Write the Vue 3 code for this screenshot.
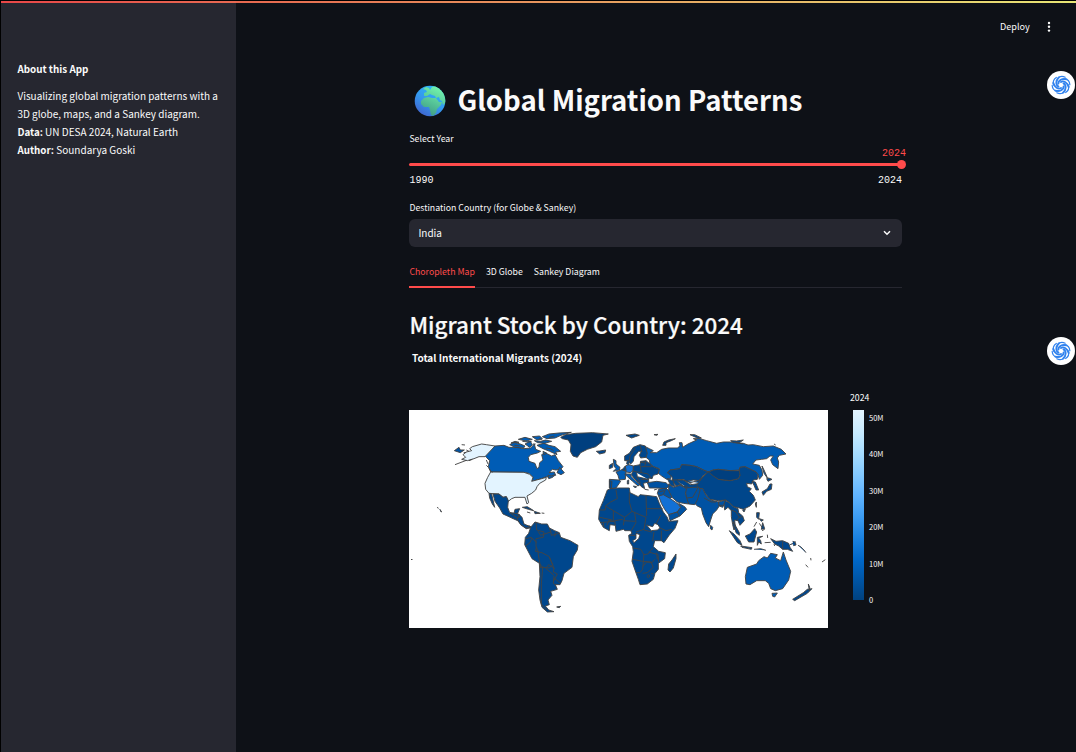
<script setup>
const info = [
  { label: '', text: 'Visualizing global migration patterns with a' },
  { label: '', text: '3D globe, maps, and a Sankey diagram.' },
  { label: 'Data:', text: ' UN DESA 2024, Natural Earth' },
  { label: 'Author:', text: ' Soundarya Goski' },
]
const tabs = ['Choropleth Map', '3D Globe', 'Sankey Diagram']
const ticks = ['50M', '40M', '30M', '20M', '10M', '0']
const arms = [0, 60, 120, 180, 240, 300]

const N = '#00478d'
const M = '#0052a3'
const C = '#005cb5'
const L = '#e3f4ff'

// Each region keeps its own local origin; three local units equal one pixel.
const regions = [
  {
    at: 'translate(409 420) scale(.33333)',
    shapes: [
      [C, 'M258 78L285 76 300 82 325 82 345 86 365 84 376 72 380 88 395 94 385 99 365 104 358 112 360 124 378 130 384 146 390 142 392 128 402 120 398 104 408 98 428 108 438 104 448 122 462 140 455 148 440 150 430 148 420 158 436 156 440 166 420 172 412 170 398 176 368 184 372 172 360 160 345 157 245 156 238 140 242 122 232 112 228 108Z'],
      [L, 'M258 78L232 74 218 72 190 80 182 86 188 92 172 96 162 104 170 112 158 118 175 122 195 116 210 110 228 110z'],
      [L, 'M245 156L345 157 362 163 372 172 368 184 398 176 412 172 410 180 392 190 384 200 380 210 368 220 354 228 359 248 354 252 348 232 330 232 318 232 308 236 298 244 292 230 282 232 270 222 240 220 230 208 228 190 236 172z'],
      [N, 'M252 222L270 222 282 232 292 230 298 242 296 262 302 278 315 280 318 268 332 266 326 280 316 288 335 290 338 305 348 318 362 318 368 323 352 326 340 318 326 302 308 294 300 290 282 282 272 264 258 244z'],
      [N, 'M240 220L248 222 252 240 257 262 250 252 242 234z'],
      [N, 'M340 262L355 260 374 272 358 268zM376 274L394 280 378 281zM354 276l10 3M398 279l8 1'],
      [N, 'M84 262l5 3M92 267l6 9-5-4'],
      ['#003f7f', 'M455 52L470 44 500 40 550 38 598 42 582 46 578 66 560 80 535 88 515 98 505 112 492 108 484 94 486 74 478 60 460 56z'],
      [N, 'M562 94L572 93 590 90 588 98 572 102z'],
      [C, 'M302 74L315 67 334 72 348 78 344 84 318 82zM328 58l20-6 22 6-18 5zM306 69l12-5 12 3zM370 50l22-2 8 8-16 4zM400 50L420 42 450 39 487 37 456 46 438 54 414 56zM376 62l20 2 14-4 18 4-20 6-22-2zM384 76L404 70 420 76 438 80 455 94 440 96 444 104 422 94 402 86zM348 72l16-8 6 10-8 8zM402 94l12 6-10 4zM372 72l8 0M390 56l10 4M340 64l16 2 12-2M316 76l16 2M410 84l14 2 10 6M420 52l16-4'],
      [C, 'M444 158L452 142 466 158 456 164zM417 166l10 2 10-4-6 8-12 4z'],
      [M, 'M136 92L150 82 154 90 166 90 154 98zM158 74l10 1M138 134L172 121M232 136l6 6M232 120l5 12M240 146l10 12M180 122l10-4M172 90l8 4M164 98l8-1'],
    ],
  },
  {
    at: 'translate(590 420) scale(.33333)',
    shapes: [
      [C, 'M166 80L178 86 190 92 180 98 200 98 215 88 235 84 262 84 270 78 268 68 276 68 278 82 294 72 320 60 310 56 330 56 350 62 380 70 400 66 420 66 460 70 474 75 490 74 520 80 550 78 574 88 588 102 568 106 562 114 566 126 564 146 548 134 542 120 550 108 540 108 530 116 515 118 498 120 488 132 508 136 516 150 518 166 508 178 504 164 498 156 465 140 450 142 448 150 420 152 385 148 370 150 355 156 340 150 320 140 300 136 275 134 270 146 240 150 232 158 244 166 242 176 230 178 215 168 205 160 208 146 190 140 180 132 178 120 168 112 170 100z'],
      [N, 'M240 150L270 146 275 134 300 136 320 140 340 150 355 156 338 168 330 182 310 180 290 184 280 178 262 180 250 190 246 170 232 158z'],
      [N, 'M246 180L262 180 280 180 300 188 325 182 338 172 334 198 310 206 290 206 270 194 258 198zM262 184l18 14 10 0 6 8M280 180l22 14 28-4M300 188l8 8'],
      ['#00468b', 'M338 172L355 155 370 165 385 178 420 182 445 176 450 166 445 160 450 142 465 140 498 156 504 164 502 178 490 180 485 192 470 190 472 200 484 206 478 214 490 226 496 240 480 258 460 268 448 264 430 260 418 248 408 240 385 242 360 238 345 220 338 206 328 206 320 196z'],
      ['#003f7f', 'M355 156L370 150 385 148 420 152 448 152 450 166 445 176 420 182 385 178 370 168z'],
      [M, 'M325 206L338 206 348 226 362 240 385 246 408 240 398 262 388 258 380 270 368 282 362 300 356 320 348 308 338 282 334 264 322 258 314 250 322 236z'],
      [M, 'M362 316l6 6-2 8-5-4z'],
      [M, 'M286 204L310 202 328 202 330 212 322 240 314 254 296 252 288 234z'],
      ['none', 'M290 234l18-2 16-28M342 234l22 12 14 0M386 244l0 12 14 0'],
      [M, 'M236 192L250 202 270 196 290 206 286 220 290 234 296 252 280 250 262 246 246 232 236 214z'],
      [M, 'M172 188L200 184 228 188 238 198 228 206 200 204 178 204z'],
      [N, 'M232 176l18 6 4 18-12-4z'],
      [M, 'M206 208L228 204 236 212 246 232 238 236 220 226 206 228 202 220zM228 204l-8 20M206 216l16-4'],
      ['#1270d5', 'M206 228L220 224 238 234 256 246 264 252 272 262 262 276 236 284 224 268 214 250z'],
      [M, 'M236 284L262 276 272 262 266 250 284 260 290 268 270 288 240 302zM262 276l6 12'],
      [N, 'M406 242L418 248 430 260 444 266 446 278 458 288 463 302 450 316 444 302 434 300 436 324 432 330 428 314 424 290 424 272 414 262 404 270 402 252zM424 270l14 6 10 16-8 8M448 292l10-2'],
      [N, 'M486 184L496 186 506 210 498 210 492 196zM516 216L532 206 540 192 546 192 544 208 530 214 520 226zM530 176l6-2 10 4-12 6zM496 252l3-6 0 16zM458 270l8-2-4 8z'],
      [C, 'M516 138L522 150 530 168 532 174 522 160z'],
      [N, 'M166 78L150 74 130 82 118 100 104 108 104 122 114 122 122 132 130 124 132 110 146 94 154 94 148 106 152 114 168 112 172 100zM150 76l6 20M136 84l-16 24-2 14'],
      [C, 'M70 118L78 122 78 132 90 142 88 150 70 154 78 146 72 138z'],
      [N, 'M58 136L68 130 68 142 58 146z'],
      [C, 'M78 156L98 148 108 156 106 178 88 180 84 166z'],
      ['#1270d5', 'M106 138L116 134 130 138 130 150 122 158 108 156z'],
      [N, 'M110 132l2-12 6 2-2 12zM96 150l10-12 2 14z'],
      [C, 'M58 178L86 180 92 184 78 204 60 206z'],
      [N, 'M58 182l8 2-2 22-6-2z'],
      [N, 'M130 138L150 134 152 124 168 122 180 132 190 140 208 148 204 162 190 166 186 176 176 174 176 186 160 190 164 206 154 200 146 188 132 174 124 164 130 150zM150 134l4 24-24-4M154 140l34 0M154 158l20 4 12 14M140 158l2 12 32 8M140 170l12 20M152 178l24 0M168 122l-4 18M150 126l20 4'],
      [C, 'M104 162L122 162 124 170 138 184 150 194 144 198 128 184 112 170zM112 182l4-2 0 12-4 0zM130 198l10 2-4 4z'],
      [N, 'M108 46L135 42 148 46 136 50 125 54zM192 44l12-1-4 3zM218 76L222 66 236 60 256 56 244 62 228 68 228 76zM300 44l14 0 20 10-10 1zM422 62l18 1 20-3-12 8-18 0zM436 68l24 4M164 208l12 2M192 210l10-3M552 72l5 3'],
    ],
  },
  {
    at: 'translate(590 480) scale(.33333)',
    shapes: [
      [N, 'M52 30L62 26 85 24 118 24 120 38 145 50 150 44 168 46 200 50 208 70 220 96 232 112 236 124 264 122 255 145 238 165 222 188 214 182 194 182 190 200 206 214 226 218 224 236 205 250 205 268 195 280 190 298 172 312 150 314 145 298 135 270 126 244 130 215 128 200 118 184 116 166 126 160 122 152 105 152 100 148 78 154 76 136 60 134 58 152 40 142 26 118 28 90 40 62z'],
      ['#fff', 'M170 135L188 140 194 130 204 134 210 144 202 150 184 152zM138 160L150 164 146 176 132 188 128 182 138 176z'],
      ['none', 'M28 90L46 90 46 78 62 66 82 56 78 30M46 78L70 92 104 112 126 94 118 66 118 38M70 92l0 32-40 4M104 112l-4 24M126 94l42 18M168 46l2 62M170 86l48 0M134 98l4 30-14 24M168 112l-6 36-24 8M100 122l36 2M76 136l-2-14 24-4M50 136l8-16 16 6M40 128l2 14M30 112l36 8M212 106l-14 26M210 144l18 8 18-4M214 152l0 30M192 156l-4 28M162 150l24 6M120 166l16 0M130 204l22 4 10 16 12-2 14-18M128 238l30 6 26 2M162 222l-4 46-8 10-12 0M158 260l12-14 16 2 8-10M184 248l6 14-18 16-14 2M176 216l28 8 2 22M200 218l2 20M190 282l-6-2M180 288l-5 5-4-3 4-6z'],
      [N, 'M258 222L258 236 250 264 240 276 234 270 236 252 246 240z'],
    ],
  },
  {
    at: 'translate(510 510) scale(.33333)',
    shapes: [
      [N, 'M62 52L75 36 95 42 112 42 118 54 134 62 148 68 152 82 180 92 204 106 202 120 190 140 186 172 162 190 156 212 150 224 136 224 142 238 122 244 126 256 114 270 118 284 106 288 116 300 132 305 112 306 96 292 90 270 86 240 90 200 88 160 66 146 44 104 46 82 56 70z'],
      ['none', 'M78 36l2 24 22 6-2 16-22 4 0 24 8 18M48 86l16-4 16 16M46 108l14-10 6-14M84 64l8 12 30-10-4-12M122 62l2 14 24-6M136 66l-2 14M80 110l-4 14 20 4 22 12 10 24-10 10-20-2-10-12M84 128l8 46 8-4M118 142l14 32-2 12 12 6-10 20M106 174l26 22M132 204l20 16M98 172l-4 50 0 60 16 18M132 198l-2 22 8 6M108 174l8-10 18 12'],
      [N, 'M140 291l12-2-4 4zM0 8l26 4 4 8-8 4zM26 12L36 22 42 42 56 48 62 50 48 54 32 44 22 28z'],
    ],
  },
  {
    at: 'translate(690 510) scale(.33333)',
    shapes: [
      [C, 'M172 172L200 162 206 152 222 140 232 144 242 130 262 134 256 144 272 152 280 126 288 150 302 184 296 210 278 236 256 242 242 236 236 220 226 212 200 212 180 224 168 222 166 200z'],
      [C, 'M246 250l16-1-8 12-6-2z'],
      [N, 'M308 268L340 248 352 238 366 236 352 250 314 272zM355 222l4 10-1 10z'],
      [N, 'M130 35L138 50 148 68 148 76 138 68zM118 62L132 72 150 92 156 106 142 98zM152 108L186 113 184 118 156 112zM166 78L180 72 194 56 200 66 192 96 176 96zM202 82L218 79 206 84 212 92 214 102 206 96 202 106zM242 86L258 94 278 92 296 100 300 112 308 124 292 118 278 118 266 108 254 102zM278 94l0 24M300 104l12-4 4-6'],
      [N, 'M200 8l8 0-2 20-6-6zM208 26l12 4-6 4zM218 38l6 18-10 2zM192 50l8-14M232 74l1 10M224 98l18-1M192 118l20-2 16 5M308 94l8 3 2 8-8 2M324 106l8 4 10 10 6 8M362 144l1 7M347 164l7 8M396 156l10-7M252 102l2 6M208 40l8 12M216 62l8-4'],
    ],
  },
]
</script>

<template>
  <div class="app">
    <div class="rainbow"></div>
    <aside class="sidebar">
      <strong class="about">About this App</strong>
      <p v-for="row in info" :key="row.text" class="info"><b>{{ row.label }}</b>{{ row.text }}</p>
    </aside>

    <main class="main">
      <h1 class="title">
        <svg class="globe" viewBox="0 0 32 32">
          <defs>
            <linearGradient id="sea" x1=".8" y1=".2" x2=".3" y2="1">
              <stop offset="0" stop-color="#2db2f8" /><stop offset=".5" stop-color="#3596ee" /><stop offset="1" stop-color="#3f66cf" />
            </linearGradient>
            <linearGradient id="land" x1=".8" y1="0" x2=".4" y2="1">
              <stop offset="0" stop-color="#79ffb2" /><stop offset="1" stop-color="#3f9e87" />
            </linearGradient>
            <clipPath id="disc"><circle cx="16" cy="16" r="15.3" /></clipPath>
          </defs>
          <circle cx="16" cy="16" r="15.3" fill="url(#sea)" />
          <path clip-path="url(#disc)" fill="url(#land)" d="M9 4l3-2 3 1 1 2 2-3 6-2 9 7 0 8-2 3-2 2-1-4-2-1-1-3-3 1 3 4 3 0-1 3-4 4-1 4-3 3-2-1-1-5-1-3-5 0-3-3 0-3 3-3 4-1 4 1 4 0-1-2-3-1-2-1-3 2-3 0 0-3 3-1-1-2z" />
        </svg>
        <span class="title-text">Global Migration Patterns</span>
      </h1>

      <div class="label year-label">Select Year</div>
      <div class="value">2024</div>
      <div class="track"><i class="thumb"></i></div>
      <div class="range"><span>1990</span><span>2024</span></div>

      <div class="label country-label">Destination Country (for Globe &amp; Sankey)</div>
      <div class="select">
        <span>India</span>
        <svg width="8" height="6" viewBox="0 0 8 6"><path d="M1 1.2L4 4.2 7 1.2" fill="none" stroke="#fafafa" stroke-width="1.5" /></svg>
      </div>

      <nav class="tabs">
        <span v-for="(t, i) in tabs" :key="t" class="tab" :class="{ active: i === 0 }">{{ t }}</span>
      </nav>

      <h2 class="heading">Migrant Stock by Country: 2024</h2>
      <div class="plot-title">Total International Migrants (2024)</div>
      <section class="plot">
        <svg class="map" viewBox="409 410 419 218">
          <g v-for="r in regions" :key="r.at" :transform="r.at" stroke="#444" stroke-width="2.8" stroke-linejoin="round">
            <path v-for="(s, i) in r.shapes" :key="i" :fill="s[0]" :d="s[1]" />
          </g>
          <path d="M411 559.5h1.5" stroke="#444" />
        </svg>
        <div class="legend">
          <span class="legend-title">2024</span>
          <div class="scale">
            <div class="bar"></div>
            <div class="ticks"><span v-for="t in ticks" :key="t">{{ t }}</span></div>
          </div>
        </div>
      </section>
    </main>

    <header class="tools">
      <span>Deploy</span>
      <svg width="4" height="12" viewBox="0 0 4 12" fill="#fafafa"><circle cx="2" cy="2" r="1.2" /><circle cx="2" cy="5.8" r="1.2" /><circle cx="2" cy="9.6" r="1.2" /></svg>
    </header>
    <div v-for="n in 2" :key="n" class="badge" :class="'badge' + n">
      <svg width="20" height="20" viewBox="-10 -10 20 20">
        <g v-for="a in arms" :key="a" :transform="`rotate(${a})`" fill="none" stroke="#3283ee" stroke-linecap="round">
          <path d="M-2.6 -1.4C-2.8 -4.6 1.2 -7 5.6 -5.6" stroke-width="1.9" />
          <path d="M-3.6 -6.6C-1.6 -8.6 1.8 -9 4.2 -7.8" stroke-width="1.2" />
        </g>
      </svg>
    </div>
  </div>
</template>

<style>
body { background: #0e1117; }
</style>

<style scoped>
* { box-sizing: border-box; }
.app {
  position: relative; display: flex; width: 1076px; height: 752px; overflow: hidden;
  background: #0e1117; color: #fafafa; border-left: 1px solid #000;
  font-family: "Noto Sans CJK SC", "Noto Sans", sans-serif; white-space: nowrap;
}
.rainbow {
  position: absolute; top: 0; left: 0; right: 0; height: 3px; border-top: 1px solid #000;
  background: linear-gradient(90deg, #ff4b4b, #fffd80) padding-box; opacity: .9;
}
.sidebar { width: 235px; padding: 60px 0 0 16.4px; background: #262730; font-size: 10px; line-height: 18px; }
.about { display: block; margin-bottom: 9px; font-size: 9.85px; line-height: 18px; }
.info { margin: 0; }
.info b { font-size: 9.8px; }
.main { width: 492.5px; margin-left: 173.4px; padding-top: 79px; }
.title { display: flex; align-items: center; height: 44px; margin: 0; padding-left: 5px; gap: 11px; font-size: 27.55px; font-weight: 700; line-height: 44px; }
.title-text { height: 48px; }
.globe { width: 32px; height: 32px; }
.label { font-size: 8.75px; line-height: 16px; }
.year-label { margin-top: 8px; }
.value { height: 12px; margin-right: -4px; padding-top: 1px; text-align: right; color: #ff4b4b; font: 10px/12px "Liberation Mono", monospace; }
.track { position: relative; height: 3px; margin-top: 4px; border-radius: 2px; background: #ff4b4b; }
.thumb { position: absolute; right: -4px; top: -3px; width: 9px; height: 9px; border-radius: 50%; background: #ff4b4b; }
.range { display: flex; justify-content: space-between; margin-top: 9px; font: 10px/12px "Liberation Mono", monospace; }
.country-label { margin-top: 13px; }
.select { display: flex; justify-content: space-between; align-items: center; height: 28px; margin-top: 3px; padding: 0 10.5px 1px 9px; border-radius: 6px; background: #262730; font-size: 10px; line-height: 25px; }
.select span { height: 26px; }
.tabs { display: flex; gap: 11px; height: 29px; margin-top: 12px; border-bottom: 1px solid #262730; font-size: 8.75px; line-height: 26px; }
.tab { height: 29px; }
.active { color: #ff4b4b; border-bottom: 2px solid #ff4b4b; }
.heading { margin: 18px 0 0; height: 36px; font-size: 22.45px; font-weight: 500; line-height: 36px; -webkit-text-stroke: .2px #fafafa; }
.plot-title { margin: 8px 0 0 2.6px; font-size: 10px; font-weight: 700; line-height: 16px; }
.plot { display: flex; margin-top: 24px; }
.map { width: 419px; height: 218px; margin-top: 20px; background: #fff; }
.legend { margin-left: 21.6px; }
.legend-title { display: block; height: 20px; font-size: 8.75px; line-height: 15px; }
.scale { display: flex; margin-left: 3px; gap: 5px; }
.bar { width: 11px; height: 190px; background: linear-gradient(#e3f4ff 0%, #c7ebff 12%, #a6dcff 23%, #83c9ff 34%, #60b4ff 45%, #3d9df3 56%, #1c83e1 67%, #0068c9 79%, #0054a3 90%, #004280 100%); }
.ticks { display: flex; flex-direction: column; justify-content: space-between; height: 193px; margin-top: 2px; font-size: 7.5px; line-height: 11px; }
.tools { position: absolute; top: 18px; left: 999px; display: flex; align-items: center; gap: 17px; font-size: 9.1px; line-height: 17px; }
.badge { position: absolute; left: 1046px; display: grid; place-items: center; width: 28px; height: 28px; border-radius: 50%; background: #fff; }
.badge1 { top: 71px; }
.badge2 { top: 337px; }
</style>
